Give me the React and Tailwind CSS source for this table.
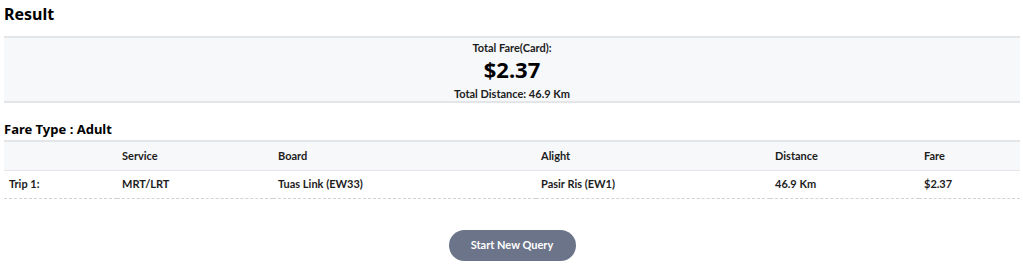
import React from "react";

const trips = [
  {
    label: "Trip 1:",
    service: "MRT/LRT",
    board: "Tuas Link (EW33)",
    alight: "Pasir Ris (EW1)",
    distance: "46.9 Km",
    fare: "$2.37",
  },
];

const App = () => {
  return (
    <div className="w-[1023px] h-[270px] bg-white text-[#1c1c1c] font-['Lato',sans-serif] overflow-hidden">
      <div className="pl-[4px] pr-[3px] pt-[4px]">
        <h2 className="text-[16px] leading-[20px] font-bold font-['Noto_Sans',sans-serif] text-black">
          Result
        </h2>

        <div className="mt-[12px] bg-[#f7f8fa] border-y-2 border-[#e3e5e9] h-[67px] flex flex-col items-center">
          <div className="mt-[3px] text-[11px] leading-[14px] font-bold">
            Total Fare(Card):
          </div>
          <div className="text-[22px] leading-[28px] font-bold font-['Noto_Sans',sans-serif] text-black">
            $2.37
          </div>
          <div className="mt-[4px] text-[11px] leading-[14px] font-bold">
            Total Distance: 46.9 Km
          </div>
        </div>

        <h3 className="mt-[17px] text-[13px] leading-[18px] font-bold font-['Noto_Sans',sans-serif] text-black">
          Fare Type : Adult
        </h3>

        <table className="mt-[2px] w-full table-fixed border-collapse text-[11px] leading-[14px]">
          <colgroup>
            <col className="w-[113px]" />
            <col className="w-[156px]" />
            <col className="w-[263px]" />
            <col className="w-[234px]" />
            <col className="w-[149px]" />
            <col />
          </colgroup>
          <thead>
            <tr className="bg-[#f7f8fa] border-t-2 border-b border-[#e3e5e9] h-[29px]">
              <th className="text-left px-[5px]"></th>
              <th className="text-left font-bold px-[5px]">Service</th>
              <th className="text-left font-bold px-[5px]">Board</th>
              <th className="text-left font-bold px-[5px]">Alight</th>
              <th className="text-left font-bold px-[5px]">Distance</th>
              <th className="text-left font-bold px-[5px]">Fare</th>
            </tr>
          </thead>
          <tbody>
            {trips.map((t) => (
              <tr key={t.label} className="border-b border-dashed border-[#cfd2d7] h-[28px] font-bold">
                <td className="px-[5px]">{t.label}</td>
                <td className="px-[5px]">{t.service}</td>
                <td className="px-[5px]">{t.board}</td>
                <td className="px-[5px]">{t.alight}</td>
                <td className="px-[5px]">{t.distance}</td>
                <td className="px-[5px]">{t.fare}</td>
              </tr>
            ))}
          </tbody>
        </table>

        <div className="mt-[31px] flex justify-center">
          <button className="h-[31px] w-[127px] rounded-full bg-[#6b7489] text-white text-[11px] font-bold">
            Start New Query
          </button>
        </div>
      </div>
    </div>
  );
};

export default App;
